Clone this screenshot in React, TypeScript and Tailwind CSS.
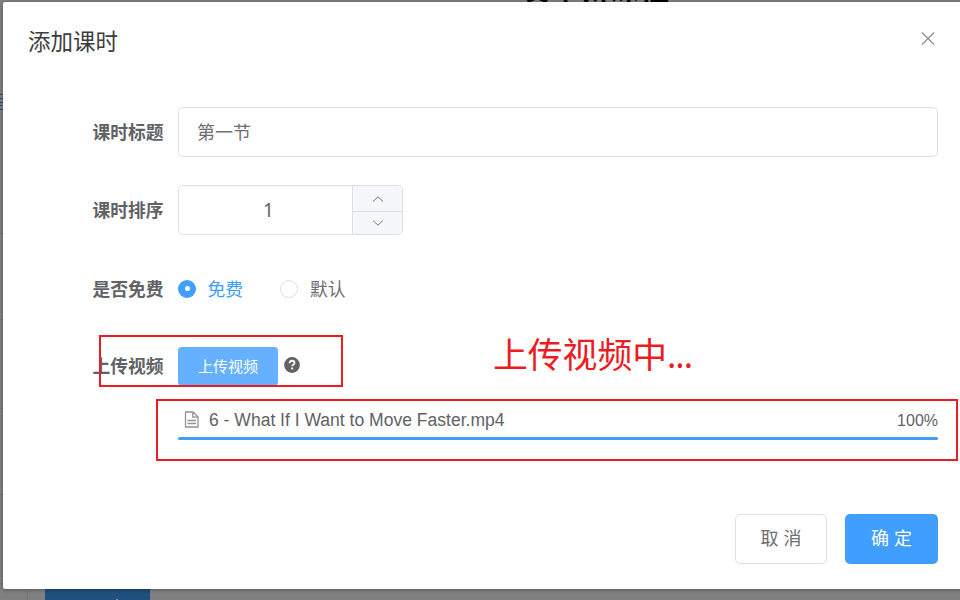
import React from "react";

const cjk = "font-['Noto_Sans_CJK_SC',sans-serif]";
const latin = "font-['Liberation_Sans','Noto_Sans_CJK_SC',sans-serif]";

function Label({ children }: { children: React.ReactNode }) {
  return (
    <label className={`${cjk} w-[160.5px] shrink-0 text-right text-[17.75px] leading-[48px] font-bold text-[#606266]`}>
      {children}
    </label>
  );
}

function PageBehind() {
  return (
    <div className="absolute inset-0 bg-[#808080]">
      <h2 className={`${cjk} absolute left-[519px] top-[-36px] text-[30px] leading-[44px] font-bold whitespace-nowrap text-black`}>
        发布新课程
      </h2>
      <div className="absolute left-0 top-[94px] h-[1px] w-[3px] bg-[#20507f]" />
      <div className="absolute left-0 top-[98px] h-[1px] w-[3px] bg-[#20507f]" />
      <div className="absolute left-0 top-[102px] h-[1px] w-[3px] bg-[#20507f]" />
      <div className="absolute left-0 top-[105px] h-[1px] w-[2px] bg-[#20507f]" />
      <div className="absolute left-0 top-[109px] h-[1px] w-[3px] bg-[#20507f]" />
      <div className="absolute left-0 top-[233px] h-[1px] w-[3px] bg-[#6e6f72]" />
      <div className="absolute left-0 top-[319px] h-[1px] w-[3px] bg-[#6e6f72]" />
      <div className="absolute left-0 top-[408px] h-[1px] w-[3px] bg-[#6e6f72]" />
      <div className="absolute left-0 top-[494px] h-[1px] w-[3px] bg-[#6e6f72]" />
      <div className="absolute left-0 top-[583px] h-[1px] w-[3px] bg-[#6e6f72]" />
      <div className="absolute left-[27px] top-[583px] h-[17px] w-[1px] bg-[#727376]" />
      <div className="absolute left-[45px] top-[580px] h-[20px] w-[105px] bg-[#20507f]" />
      <div className="absolute left-[116px] top-[599px] h-[1px] w-[2px] bg-[#7f8fa0]" />
    </div>
  );
}

export default function App() {
  return (
    <div className="relative h-[600px] w-[960px] overflow-hidden">
      <PageBehind />
      <div className="relative flex h-full w-full pt-[2px] pl-[3px]">
        <div className="flex h-[587px] w-[970px] shrink-0 flex-col rounded-[2px] bg-white pr-[35px] shadow-[0_1px_4px_rgba(0,0,0,0.35)]">
          <header className="flex h-[105px] items-start justify-between pl-[25px]">
            <h1 className={`${cjk} pt-[22px] text-[22.5px] leading-[32px] font-normal text-[#3c3d40]`}>添加课时</h1>
            <svg className="mt-[30px] mr-[3px] h-[14px] w-[14px]" viewBox="0 0 14 14" fill="none" stroke="#909399" strokeWidth="1.4">
              <path d="M1 .5 13 12.5M13 .5 1 12.5" />
            </svg>
          </header>

          <div className="flex h-[50px] gap-[14.5px]">
            <Label>课时标题</Label>
            <div className={`${cjk} flex-1 rounded-[5px] border border-[#dcdfe6] pl-[18px] text-[18px] leading-[46px] font-normal text-[#6c6e72]`}>
              第一节
            </div>
          </div>

          <div className="mt-[28px] flex h-[50px] gap-[14.5px]">
            <Label>课时排序</Label>
            <div className="flex w-[225px] overflow-hidden rounded-[5px] border border-[#dcdfe6]">
              <div className="flex-1 pl-[6px] text-center font-['Noto_Sans',sans-serif] text-[19px] leading-[49px] font-normal text-[#606266]">1</div>
              <div className="flex w-[50px] shrink-0 flex-col border-l border-[#dcdfe6] bg-[#f5f7fa]">
                <div className="flex h-[26px] items-center justify-center border-b border-[#dcdfe6]">
                  <svg className="h-[6px] w-[12px]" viewBox="0 0 12 6" fill="none" stroke="#75787e" strokeWidth="1">
                    <path d="M1 5.5 6 .8l5 4.7" />
                  </svg>
                </div>
                <div className="flex h-[21px] items-center justify-center">
                  <svg className="h-[6px] w-[12px]" viewBox="0 0 12 6" fill="none" stroke="#75787e" strokeWidth="1">
                    <path d="M1 .5l5 4.7L11 .5" />
                  </svg>
                </div>
              </div>
            </div>
          </div>

          <div className="mt-[29px] flex h-[50px] gap-[14.5px]">
            <Label>是否免费</Label>
            <div className={`${cjk} flex h-[49px] items-center text-[17.75px] leading-[48px] font-normal`}>
              <span className="flex h-[18px] w-[18px] items-center justify-center rounded-full bg-[#409eff]">
                <span className="h-[5px] w-[5px] rounded-full bg-white" />
              </span>
              <span className="mt-[-2px] ml-[11.5px] text-[#409eff]">免费</span>
              <span className="ml-[37px] h-[18px] w-[18px] rounded-full border border-[#dcdfe6]" />
              <span className="mt-[-2px] ml-[12px] text-[#6c6e72]">默认</span>
            </div>
          </div>

          <div className="mt-[27px] flex h-[50px] gap-[14.5px]">
            <Label>上传视频</Label>
            <div className="flex items-center">
              <button className={`${cjk} h-[39px] w-[100px] rounded-[4px] bg-[#66b1ff] pb-[2px] text-[15px] leading-[37px] text-white`}>上传视频</button>
              <svg className="mt-[-2px] ml-[6px] h-[16px] w-[16px]" viewBox="0 0 16 16">
                <circle cx="8" cy="8" r="7.9" fill="#606266" />
                <path d="M5.6 6.2C5.6 4.5 6.6 3.8 8 3.8s2.5.8 2.5 2.1c0 1.6-2.2 1.7-2.2 3.3" fill="none" stroke="white" strokeWidth="1.9" />
                <rect x="7.2" y="10.5" width="2" height="1.9" fill="white" />
              </svg>
            </div>
          </div>

          <div className={`${latin} mt-[15px] ml-[175px] flex h-[27px] items-center text-[#606266]`}>
            <svg className="ml-[6px] h-[17px] w-[15px] shrink-0" viewBox="0 0 15 17" fill="none" stroke="#909399" strokeWidth="1.3">
              <path d="M1.5 1h7.5l5 5V16H1.5zM8.8 1v5.2H14M3.5 9.5H12M3.5 12.5H12" />
            </svg>
            <span className="mt-[2px] ml-[10px] text-[17.55px]">6 - What If I Want to Move Faster.mp4</span>
            <span className="mt-[2px] ml-auto text-[16px]">100%</span>
          </div>
          <div className="mt-[4px] ml-[175px] h-[3px] shrink-0 rounded-full bg-[#409eff]" />

          <footer className={`${cjk} mt-[74px] flex justify-end gap-[18px] text-[18px]`}>
            <button className="h-[50px] w-[92px] rounded-[5px] border border-[#dcdfe6] pb-[3px] font-normal [word-spacing:1px] text-[#6c6e72]">取 消</button>
            <button className="h-[50px] w-[93px] rounded-[5px] bg-[#409eff] pb-[3px] [word-spacing:1px] text-white">确 定</button>
          </footer>
        </div>
      </div>

      <div className="absolute left-[99px] top-[335px] h-[52px] w-[244px] border-2 border-[#ed1c24]" />
      <div className="absolute left-[156px] top-[399px] h-[62px] w-[802px] border-2 border-[#ed1c24]" />
      <div className={`${cjk} absolute left-[493px] top-[328px] text-[34.8px] leading-[50px] whitespace-nowrap text-[#ed1c24]`}>
        上传视频中<span className="font-['Noto_Sans',sans-serif] tracking-[-1px]">...</span>
      </div>
    </div>
  );
}
